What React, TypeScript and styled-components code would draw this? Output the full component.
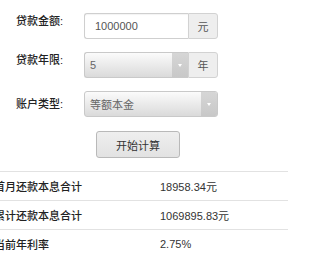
import React from "react";
import styled, { createGlobalStyle } from "styled-components";

const GlobalStyle = createGlobalStyle`
    body {
        margin: 0;
        background: #ffffff;
        font-family: "Liberation Sans", "Noto Sans CJK SC", sans-serif;
        color: #333;
        overflow: hidden;
    }
`;

const Page = styled.div`
    padding-top: 13px;
    width: 300px;
`;

const Form = styled.div`
    display: flex;
    flex-direction: column;
    gap: 13px;
    padding-left: 16px;
`;

const Row = styled.div<{ $center?: boolean }>`
    display: grid;
    grid-template-columns: 68px 134px;
    align-items: ${props => (props.$center ? "center" : "start")};
`;

const Label = styled.span`
    font-size: 11px;
    line-height: 16px;
    color: #222;
    font-weight: 500;
`;

const Group = styled.div`
    display: flex;
    height: 26px;
`;

const TextBox = styled.div`
    flex: 1;
    display: flex;
    align-items: center;
    padding-left: 10px;
    font-size: 11px;
    color: #555;
    background: #fff;
    border: 1px solid #cfcfcf;
    border-right: none;
    border-radius: 3px 0 0 3px;
    box-shadow: inset 0 1px 1px rgba(0, 0, 0, 0.05);
`;

const Addon = styled.div`
    width: 30px;
    display: flex;
    align-items: center;
    justify-content: center;
    font-size: 11px;
    color: #555;
    background: #eeeeee;
    border: 1px solid #d2d2d2;
    border-radius: 0 3px 3px 0;
    box-sizing: border-box;
`;

const Select = styled.div<{ $alone?: boolean }>`
    flex: 1;
    display: flex;
    font-size: 11px;
    color: #666;
    background: linear-gradient(#fbfbfb, #dadada);
    border: 1px solid #c9c9c9;
    border-right: ${props => (props.$alone ? "1px solid #c9c9c9" : "none")};
    border-radius: ${props => (props.$alone ? "3px" : "3px 0 0 3px")};
    overflow: hidden;
`;

const SelectText = styled.span`
    flex: 1;
    display: flex;
    align-items: center;
    padding-left: 5px;
`;

const Arrow = styled.span`
    width: 16px;
    display: flex;
    align-items: center;
    justify-content: center;
    background: linear-gradient(#d6d6d6, #c8c8c8);
    &::after {
        content: "";
        border-left: 2.5px solid transparent;
        border-right: 2.5px solid transparent;
        border-top: 3px solid #fff;
    }
`;

const ButtonRow = styled.div`
    padding: 14px 0 0 96px;
`;

const Button = styled.button`
    width: 84px;
    height: 27px;
    font-family: inherit;
    font-size: 11px;
    color: #333;
    background: linear-gradient(#efefef, #e2e2e2);
    border: 1px solid #b9b9b9;
    border-radius: 3px;
    padding: 0;
`;

const Table = styled.div`
    margin: 13px 0 0 -6px;
    width: 294px;
`;

const TableRow = styled.div<{ $last?: boolean }>`
    display: grid;
    grid-template-columns: 166px 1fr;
    align-items: center;
    height: 29px;
    border-top: 1px solid #e2e2e2;
    box-sizing: border-box;
`;

const Name = styled.span`
    font-size: 11px;
    color: #222;
    font-weight: 500;
`;

const Value = styled.span`
    font-size: 11px;
    color: #333;
`;

const results = [
    { name: "首月还款本息合计", value: "18958.34元" },
    { name: "累计还款本息合计", value: "1069895.83元" },
    { name: "当前年利率", value: "2.75%" },
];

export default function App() {
    return (
        <Page>
            <GlobalStyle />
            <Form>
                <Row>
                    <Label>贷款金额:</Label>
                    <Group>
                        <TextBox>1000000</TextBox>
                        <Addon>元</Addon>
                    </Group>
                </Row>
                <Row>
                    <Label>贷款年限:</Label>
                    <Group>
                        <Select>
                            <SelectText>5</SelectText>
                            <Arrow />
                        </Select>
                        <Addon>年</Addon>
                    </Group>
                </Row>
                <Row $center>
                    <Label>账户类型:</Label>
                    <Group>
                        <Select $alone>
                            <SelectText>等额本金</SelectText>
                            <Arrow />
                        </Select>
                    </Group>
                </Row>
            </Form>
            <ButtonRow>
                <Button>开始计算</Button>
            </ButtonRow>
            <Table>
                {results.map(r => (
                    <TableRow key={r.name}>
                        <Name>{r.name}</Name>
                        <Value>{r.value}</Value>
                    </TableRow>
                ))}
            </Table>
        </Page>
    );
}
